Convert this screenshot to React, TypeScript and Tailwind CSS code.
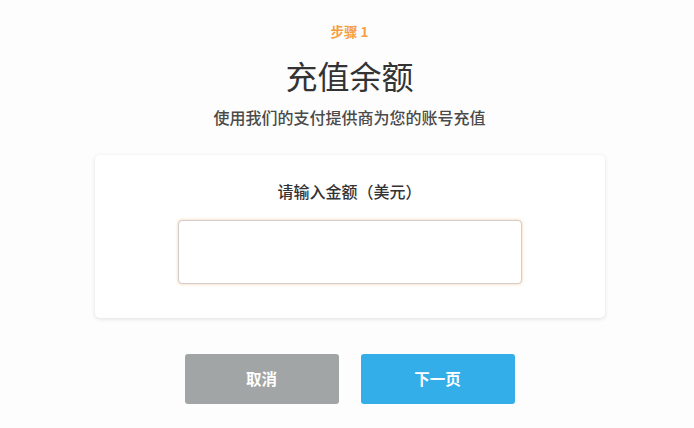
import React from "react";

export default function App() {
  const font = { fontFamily: '"Noto Sans CJK SC", "Noto Sans", sans-serif' };
  return (
    <div className="w-[694px] h-[428px] bg-[#fdfdfd] flex flex-col items-center pl-[5px]" style={font}>
      <div className="mt-[21px] h-[20px] leading-[20px] text-[13.5px] font-bold text-[#f5a03f]">步骤 1</div>
      <div className="mt-[14px] h-[40px] leading-[40px] text-[32px] text-[#333333]">充值余额</div>
      <div className="mt-[10px] h-[24px] leading-[24px] text-[16px] font-medium text-[#4a4a4a]">使用我们的支付提供商为您的账号充值</div>
      <div className="mt-[26px] w-[510px] bg-white rounded-[5px] shadow-[0_1px_4px_rgba(0,0,0,0.12)] flex flex-col items-center pt-[25px] pb-[34px]">
        <div className="h-[22px] leading-[22px] text-[16px] font-medium text-[#333333]">请输入金额（美元）</div>
        <input
          type="text"
          className="mt-[18px] w-[344px] h-[64px] rounded-[4px] border border-[#cfcfcf] bg-white shadow-[0_0_3px_rgba(245,160,63,0.55)] outline-none px-3"
        />
      </div>
      <div className="mt-[36px] flex gap-[22px]">
        <button className="w-[154px] h-[50px] rounded-[3px] bg-[#a2a5a5] text-white text-[15.5px] font-bold">取消</button>
        <button className="w-[154px] h-[50px] rounded-[3px] bg-[#33aee8] text-white text-[15.5px] font-bold">下一页</button>
      </div>
    </div>
  );
}
